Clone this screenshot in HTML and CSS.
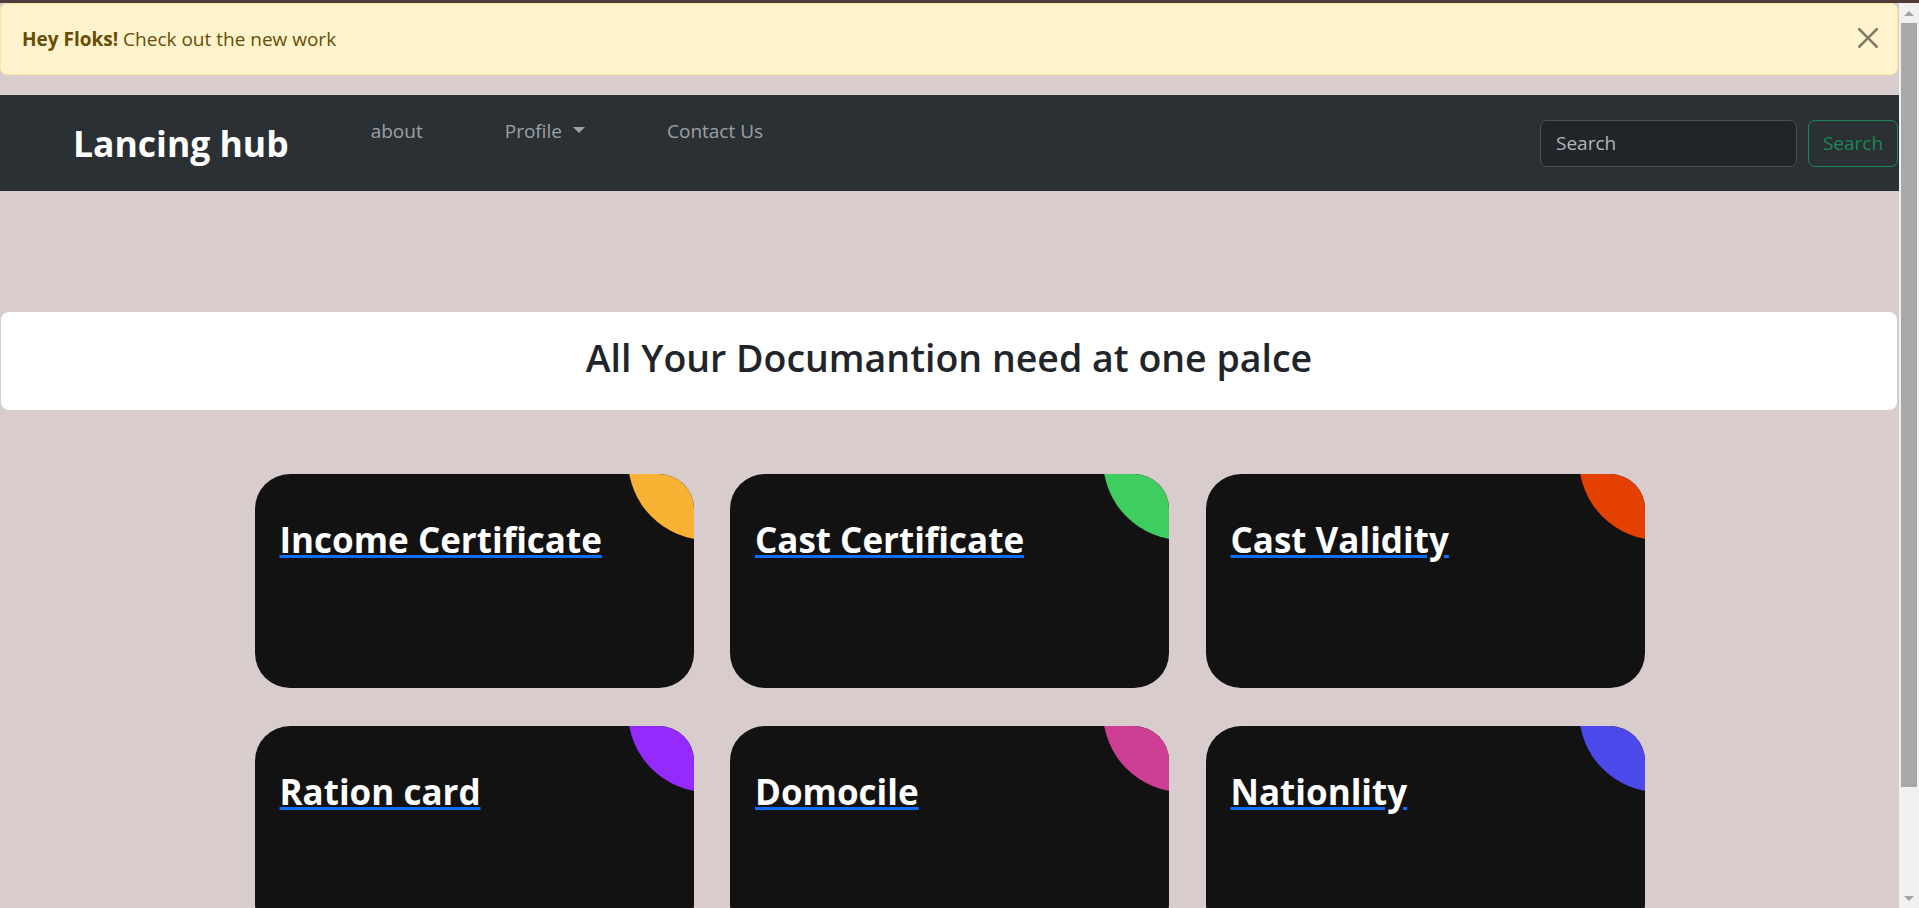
FILE: index.html
```html
<!DOCTYPE html>
<html lang="en">
<head>
<meta charset="utf-8">
<title>Lancing hub</title>
<link rel="stylesheet" href="styles.css">
</head>
<body>
<div class="topline"></div>
<div class="frame">
  <div class="page">
    <div class="alert" role="alert">
      <span><strong>Hey Floks!</strong> Check out the new work</span>
      <button class="btn-close" type="button" aria-label="Close">
        <svg viewBox="0 0 16 16" width="20" height="20" aria-hidden="true"><path d="M.293.293a1 1 0 0 1 1.414 0L8 6.586 14.293.293a1 1 0 1 1 1.414 1.414L9.414 8l6.293 6.293a1 1 0 0 1-1.414 1.414L8 9.414l-6.293 6.293a1 1 0 0 1-1.414-1.414L6.586 8 .293 1.707a1 1 0 0 1 0-1.414z"/></svg>
      </button>
    </div>

    <nav class="navbar">
      <a class="brand" href="#">Lancing hub</a>
      <ul class="nav">
        <li><a class="nav-link" href="#">about</a></li>
        <li><a class="nav-link" href="#">Profile<span class="caret"></span></a></li>
        <li><a class="nav-link" href="#">Contact Us</a></li>
      </ul>
      <form class="search" role="search">
        <input class="search-input" type="search" placeholder="Search" aria-label="Search">
        <button class="search-btn" type="button">Search</button>
      </form>
    </nav>

    <div class="hero">
      <h2 class="hero-title">All Your Documantion need at one palce</h2>
    </div>

    <div class="courses">
      <div class="course"><a class="course-link" href="#"><span class="course-bg bg-1"></span><div class="course-title">Income Certificate</div></a></div>
      <div class="course"><a class="course-link" href="#"><span class="course-bg bg-2"></span><div class="course-title">Cast Certificate</div></a></div>
      <div class="course"><a class="course-link" href="#"><span class="course-bg bg-3"></span><div class="course-title">Cast Validity</div></a></div>
      <div class="course"><a class="course-link" href="#"><span class="course-bg bg-4"></span><div class="course-title">Ration card</div></a></div>
      <div class="course"><a class="course-link" href="#"><span class="course-bg bg-5"></span><div class="course-title">Domocile</div></a></div>
      <div class="course"><a class="course-link" href="#"><span class="course-bg bg-6"></span><div class="course-title">Nationlity</div></a></div>
    </div>
  </div>

  <div class="scrollbar" aria-hidden="true">
    <span class="sb-btn"><span class="sb-arrow-up"></span></span>
    <span class="sb-thumb"></span>
    <span class="sb-fill"></span>
    <span class="sb-btn"><span class="sb-arrow-down"></span></span>
  </div>
</div>
</body>
</html>
```

FILE: styles.css
```css
html {
  background: #d9cccd;
}

body {
  margin: 0;
  background: #d9cccd;
  color: #212529;
  font-family: "Open Sans", "Noto Sans", sans-serif;
  font-size: 20px;
  line-height: 1.5;
}

.topline {
  height: 3px;
  background: #4f3a3a;
}

.frame {
  display: flex;
  align-items: flex-start;
}

.page {
  flex: 1 1 auto;
  min-width: 0;
}

/* scrollbar column */
.scrollbar {
  display: flex;
  flex: 0 0 20px;
  flex-direction: column;
  align-items: center;
  height: 905px;
  background: #f0f0f0;
}
.sb-btn {
  display: flex;
  flex: 0 0 20px;
  align-items: center;
  justify-content: center;
}
.sb-arrow-up,
.sb-arrow-down {
  width: 0;
  height: 0;
  border-right: 5px solid transparent;
  border-left: 5px solid transparent;
}
.sb-arrow-up {
  border-bottom: 5px solid #a3a3a3;
}
.sb-arrow-down {
  border-top: 5px solid #a3a3a3;
}
.sb-thumb {
  flex: 0 0 764px;
  width: 16px;
  background: #a8a8a8;
}
.sb-fill {
  flex: 1 1 auto;
}

/* alert */
.alert {
  display: flex;
  align-items: flex-start;
  justify-content: space-between;
  margin: 0 1px 20px 0;
  padding: 20px 19px 20px 21px;
  border: 1px solid #ffe69c;
  border-radius: 7px;
  background: #fff3cd;
  color: #664d03;
  font-size: 19px;
  line-height: 30px;
}
.alert strong {
  font-weight: 700;
}
.btn-close {
  display: flex;
  margin: 4px 0 0 0;
  padding: 0;
  border: 0;
  background: none;
  opacity: .5;
  cursor: pointer;
}
.btn-close svg {
  fill: #000;
}

/* navbar */
.navbar {
  display: flex;
  align-items: center;
  height: 96px;
  padding: 0 1px 0 73px;
  background: #2b3035;
}
.brand {
  color: #fff;
  font-size: 35.5px;
  font-weight: 700;
  line-height: 1.2;
  text-decoration: none;
}
.nav {
  display: flex;
  align-self: flex-start;
  gap: 82px;
  margin: 0 0 0 82px;
  padding: 21px 0 0;
  list-style: none;
}
.nav-link {
  color: rgba(255, 255, 255, .55);
  font-size: 19px;
  line-height: 30px;
  text-decoration: none;
}
.caret {
  display: inline-block;
  margin-left: 11px;
  vertical-align: 5px;
  border-top: 6px solid;
  border-right: 6px solid transparent;
  border-left: 6px solid transparent;
}
.search {
  display: flex;
  gap: 11px;
  margin-left: auto;
}
.search-input {
  box-sizing: border-box;
  width: 257px;
  height: 47px;
  padding: 7px 15px;
  border: 1px solid #495057;
  border-radius: 7px;
  background: #212529;
  color: #dee2e6;
  font: inherit;
  font-size: 19px;
}
.search-input::placeholder {
  color: #b4b7ba;
}
.search-btn {
  box-sizing: border-box;
  width: 90px;
  height: 47px;
  padding: 7px 0;
  border: 1px solid #198754;
  border-radius: 7px;
  background: transparent;
  color: #198754;
  font: inherit;
  font-size: 19px;
}

/* hero */
.hero {
  margin: 121px 2px 0 1px;
  padding: 22px 0 28px;
  border-radius: 8px;
  background: #fff;
  text-align: center;
}
.hero-title {
  margin: 0;
  font-size: 37.5px;
  font-weight: 600;
  line-height: 48px;
}

/* courses */
.courses {
  display: grid;
  grid-template-columns: repeat(3, 439px);
  justify-content: center;
  column-gap: 36.5px;
  row-gap: 38px;
  padding: 64px 0 100px;
}
.course {
  overflow: hidden;
  border-radius: 35px;
}
.course-link {
  position: relative;
  display: block;
  overflow: hidden;
  padding: 40px 25px 37px;
  background: #121212;
  color: #0d6efd;
}
.course-bg {
  position: absolute;
  top: -94px;
  right: -94px;
  width: 160px;
  height: 160px;
  border-radius: 50%;
}
.bg-1 { background: #f9b234; }
.bg-2 { background: #3ecd5e; }
.bg-3 { background: #e44002; }
.bg-4 { background: #952aff; }
.bg-5 { background: #cd3e94; }
.bg-6 { background: #4c49ea; }

.course-title {
  position: relative;
  z-index: 2;
  min-height: 106px;
  margin-bottom: 31px;
  color: #fff;
  font-size: 35px;
  font-weight: 700;
  line-height: 1.5;
}
```
